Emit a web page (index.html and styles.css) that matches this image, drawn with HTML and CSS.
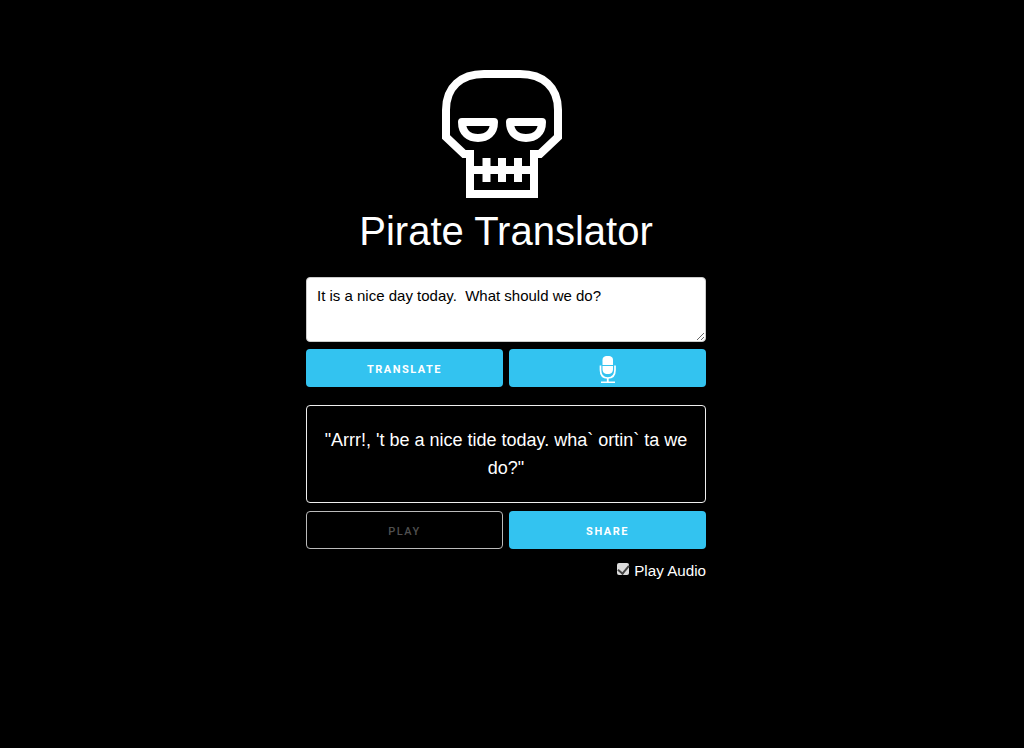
FILE: index.html
```html
<!DOCTYPE html>
<html lang="en">
<head>
<meta charset="utf-8">
<title>Pirate Translator</title>
<link rel="stylesheet" href="styles.css">
</head>
<body>
<main class="app">
  <svg class="skull" viewBox="0 0 120 128" width="120" height="128" aria-hidden="true">
    <path class="skull-line" d="M28 124V84H22L4 67V40C4 17 19 4 42 4H78C101 4 116 17 116 40V67L98 84H92V124Z"/>
    <path class="skull-eye" d="M20 52H52C52 63 45 68 36 68C27 68 20 63 20 52Z"/>
    <path class="skull-eye" d="M68 52H100C100 63 93 68 84 68C75 68 68 63 68 52Z"/>
    <path class="skull-line" d="M28 100H92M44.500 88V112M60 88V112M76 88V112"/>
  </svg>
  <h1 class="title">Pirate Translator</h1>
  <textarea class="input" spellcheck="false">It is a nice day today.  What should we do?</textarea>
  <div class="row">
    <button class="btn" type="button">Translate</button>
    <button class="btn" type="button" aria-label="Microphone">
      <svg class="mic" viewBox="0 0 18 28" width="18" height="28" aria-hidden="true">
        <path class="mic-head" d="M3.500 5.500C3.500 2.500 4.500 1 8.750 1S14 2.500 14 5.500V10H3.500Z"/>
        <path class="mic-head" d="M3.500 11H14V14C14 17 12.500 19 8.750 19S3.500 17 3.500 14Z"/>
        <path class="mic-line" d="M1.500 10.500V15C1.500 20.500 4.500 23 8.750 23S16 20.500 16 15V10.500"/>
        <path class="mic-base" d="M8.750 23V27M2 27.500H16"/>
      </svg>
    </button>
  </div>
  <div class="output">"Arrr!, 't be a nice tide today. wha` ortin` ta we do?"</div>
  <div class="row row-tight">
    <button class="btn btn-off" type="button" disabled>Play</button>
    <button class="btn" type="button">Share</button>
  </div>
  <label class="audio"><input class="audio-box" type="checkbox" checked disabled>Play Audio</label>
</main>
</body>
</html>
```
FILE: styles.css
```css
* { box-sizing: border-box; }
html, body { margin: 0; height: 100%; }
body {
  background: #000;
  color: #fff;
  font-family: "Liberation Sans", Arial, sans-serif;
  padding-right: 12px;
}
.app {
  width: 400px;
  margin: 0 auto;
  padding-top: 70px;
  display: flex;
  flex-direction: column;
}
.skull { display: block; align-self: center; margin-right: 8px; }
.skull-line {
  fill: none;
  stroke: #fff;
  stroke-width: 8;
  stroke-linejoin: miter;
}
.skull-eye {
  fill: none;
  stroke: #fff;
  stroke-width: 8;
  stroke-linejoin: round;
}
.title {
  margin: 8px 0 21px;
  font-size: 40px;
  line-height: 50px;
  font-weight: 400;
  text-align: center;
}
.input {
  display: block;
  width: 400px;
  height: 65px;
  padding: 8px 10px;
  border: 1px solid #ccc;
  border-radius: 4px;
  background: #fff;
  color: #000;
  font-family: "Liberation Sans", Arial, sans-serif;
  font-size: 15px;
  line-height: 20px;
  outline: none;
}
.row {
  display: grid;
  grid-template-columns: 197px 197px;
  gap: 6px;
  margin-top: 7px;
}
.row-tight { margin-top: 8px; }
.btn {
  height: 38px;
  padding: 2px 0 0;
  border: 0;
  border-radius: 4px;
  background: #33c3f0;
  color: #fff;
  font-family: Roboto, "Liberation Sans", sans-serif;
  font-size: 11px;
  font-weight: 700;
  letter-spacing: 1.5px;
  text-transform: uppercase;
  display: flex;
  align-items: center;
  justify-content: center;
}
.btn-off {
  background: #000;
  border: 1px solid #bbb;
  color: #505050;
  font-weight: 500;
}
.mic { display: block; }
.mic-head { fill: #fff; }
.mic-line { fill: none; stroke: #fff; stroke-width: 1.700; }
.mic-base { fill: none; stroke: #fff; stroke-width: 1.800; }
.output {
  margin-top: 18px;
  height: 98px;
  padding: 20px 10px;
  border: 1px solid #eee;
  border-radius: 4px;
  font-size: 18px;
  line-height: 28px;
  text-align: center;
}
.audio {
  margin-top: 13px;
  align-self: flex-end;
  display: flex;
  align-items: center;
  font-size: 15.200px;
  line-height: 18px;
}
.audio-box {
  appearance: none;
  margin: 0 5px 4px 0;
  width: 12px;
  height: 12px;
  border-radius: 2px;
  background: #dcdcdc;
  display: flex;
  align-items: center;
  justify-content: center;
}
.audio-box::before {
  content: "";
  width: 5px;
  height: 9px;
  margin-top: -2px;
  border-right: 2px solid #444;
  border-bottom: 2px solid #444;
  transform: rotate(40deg);
}
```
